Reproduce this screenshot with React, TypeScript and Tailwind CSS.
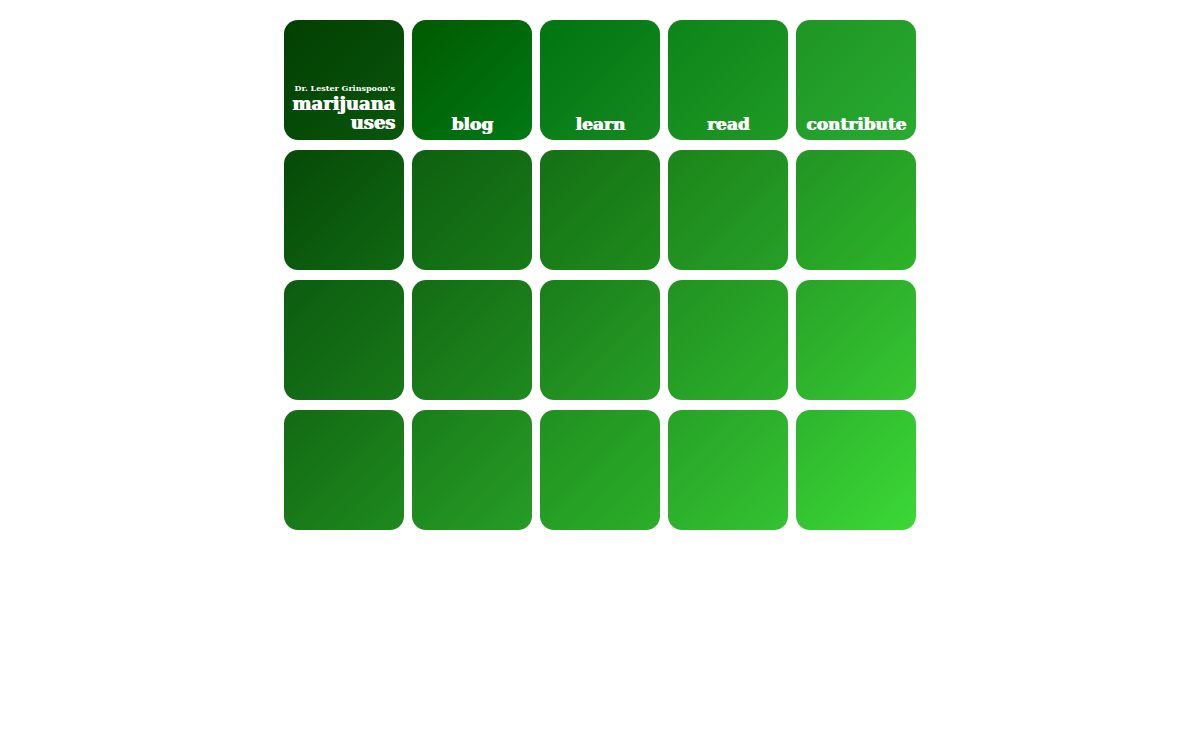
import clsx from "clsx";

type NavTile = {
  label: string;
  href: string;
  gradient: string;
};

const navTiles: NavTile[] = [
  { label: "blog", href: "#blog", gradient: "from-[#005a00] to-[#007a14]" },
  { label: "learn", href: "#learn", gradient: "from-[#007410] to-[#148a20]" },
  { label: "read", href: "#read", gradient: "from-[#0c8418] to-[#1f9a26]" },
  { label: "contribute", href: "#contribute", gradient: "from-[#1f9424] to-[#27ac30]" },
];

// three rows of five, dark to light
const emptyTiles = [
  "from-[#064a08] to-[#106812]",
  "from-[#0e6010] to-[#187a18]",
  "from-[#147014] to-[#1e8c1c]",
  "from-[#1c841a] to-[#26a028]",
  "from-[#229424] to-[#2cb428]",

  "from-[#0c5c10] to-[#187818]",
  "from-[#146c14] to-[#1e8a1e]",
  "from-[#1a7e1a] to-[#269e26]",
  "from-[#229222] to-[#2cb02a]",
  "from-[#28a428] to-[#36c632]",

  "from-[#136a13] to-[#1e8a1e]",
  "from-[#1a7e1a] to-[#269c26]",
  "from-[#209020] to-[#2bae29]",
  "from-[#27a227] to-[#34c232]",
  "from-[#2db42d] to-[#3cd836]",
];

const tileClass = "flex aspect-square flex-col justify-end rounded-[14px] bg-linear-to-br";

// thickens the bold serif towards a slab weight
const slabClass = "[text-shadow:1px_0_0_currentColor]";

export default function App() {
  return (
    <main className="min-h-screen bg-white py-5 font-['DejaVu_Serif',serif] font-bold text-white">
      <div className="mx-auto grid max-w-[632px] grid-cols-5 gap-x-2 gap-y-[10px]">
        <a
          href="#home"
          className={clsx(tileClass, "items-end pr-[9px] pb-2", "from-[#023f02] to-[#0a560d]")}
        >
          <span className="text-[8px] leading-3 whitespace-nowrap">Dr. Lester Grinspoon's</span>
          <h1 className={clsx("text-right text-[18px] leading-[19px]", slabClass)}>
            marijuana
            <br />
            uses
          </h1>
        </a>

        {navTiles.map((tile) => (
          <a
            key={tile.label}
            href={tile.href}
            className={clsx(
              tileClass,
              slabClass,
              "items-center pb-[6px] text-[17px] leading-5",
              tile.gradient
            )}
          >
            {tile.label}
          </a>
        ))}

        {emptyTiles.map((gradient, i) => (
          <div key={i} className={clsx(tileClass, gradient)} />
        ))}
      </div>
    </main>
  );
}
